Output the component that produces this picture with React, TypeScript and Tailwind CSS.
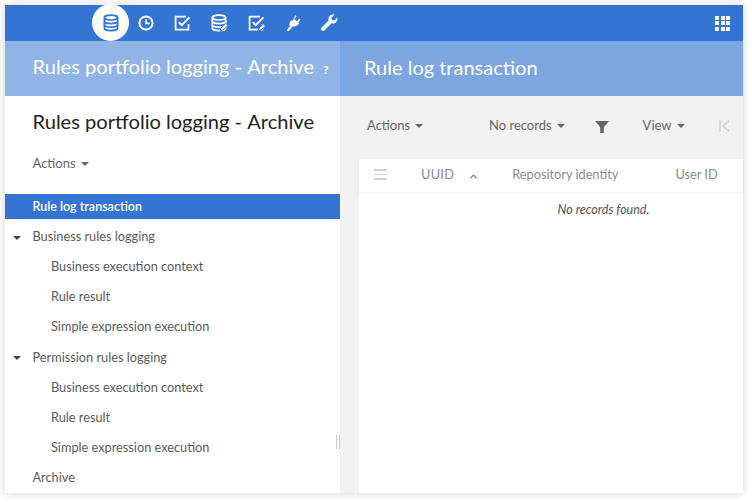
import { ChevronUp } from "lucide-react";

const Caret = ({ className = "" }: { className?: string }) => (
  <svg width="8" height="4" viewBox="0 0 8 4" className={className}>
    <path d="M0 0h8L4 4z" fill="currentColor" />
  </svg>
);

const Db = ({ size = 18, color = "currentColor", edit = false }: { size?: number; color?: string; edit?: boolean }) => (
  <svg width={size} height={size} viewBox="0 0 18 18" fill="none" stroke={color} strokeWidth="1.7">
    <ellipse cx="9" cy="3.6" rx="6.6" ry="2.4" />
    <path d="M2.4 3.6v10.6c0 1.3 3 2.4 6.6 2.4s6.6-1.1 6.6-2.4V3.6" />
    <path d="M2.4 7.2c0 1.3 3 2.4 6.6 2.4s6.6-1.1 6.6-2.4M2.4 10.8c0 1.3 3 2.4 6.6 2.4s6.6-1.1 6.6-2.4" />
    {edit && <path d="M10 17l1-3 5-4.5 2 2-5 4.5z" fill={color} stroke="#3474d2" strokeWidth="1" />}
  </svg>
);

const Clock = () => (
  <svg width="16" height="16" viewBox="0 0 16 16" fill="none" stroke="white" strokeWidth="2">
    <circle cx="8" cy="8" r="6.6" />
    <path d="M8 4.2V8.4H11.6" strokeWidth="1.6" />
  </svg>
);

const Check = ({ edit = false }: { edit?: boolean }) => (
  <svg width="17" height="17" viewBox="0 0 17 17" fill="none" stroke="white" strokeWidth="1.7">
    <path d="M14.5 9v5.6H1.6V1.6H12" />
    <path d="M4.8 7.2l3 3L15.4 2.4" strokeWidth="2" />
    {edit && <path d="M10 16l1-3 4.5-4 2 2-4.5 4z" fill="white" stroke="#3474d2" strokeWidth="1" />}
  </svg>
);

const Plug = () => (
  <svg width="18" height="18" viewBox="0 0 18 18" fill="white">
    <path d="M11.2 1.2l1.4 1.1-2.4 2.8 2.7 2.2 2.4-2.8 1.4 1.1-2.5 2.9 1 .9-1 1.2c-1.5 1.7-3.6 2.3-5.3 1.7L7 14.6 4.6 17l-1-.1-.9-.9 3.1-3.5c-.8-1.6-.5-3.7 1-5.4l1-1.2 1 .8z" />
  </svg>
);

const Wrench = () => (
  <svg width="18" height="18" viewBox="0 0 18 18" fill="white">
    <path d="M17.2 3.6l-3 2.9-2.2-.6-.6-2.2 3-3c-1.8-.5-3.5 0-4.7 1.2C8.5 3.1 8.1 4.8 8.7 6.4L1.3 14c-.5.5-.5 1.3 0 1.8l.9.9c.5.5 1.3.5 1.8 0l7.5-7.5c1.6.6 3.4.2 4.6-1 1.2-1.2 1.6-3 1.1-4.6z" />
  </svg>
);

const Grid = () => (
  <div className="grid grid-cols-3 gap-[1.5px] w-[15px]">
    {Array.from({ length: 9 }).map((_, i) => (
      <div key={i} className="w-[4px] h-[4px] bg-white" />
    ))}
  </div>
);

const Item = ({ label, indent = false, caret = false }: { label: React.ReactNode; indent?: boolean; caret?: boolean }) => (
  <div className={`relative h-[30.1px] flex items-center text-[12.75px] text-[#5a5a5a] ${indent ? "pl-[46px]" : "pl-[27.5px]"}`}>
    {caret && <Caret className="absolute left-[8px] top-[14px] text-[#444]" />}
    <span>{label}</span>
  </div>
);

const Arch = ({ children }: { children: React.ReactNode }) => (
  <span className="[font-variant-ligatures:common-ligatures]">{children}</span>
);

const Cell = ({ children }: { children: React.ReactNode }) => (
  <div className="w-[36.6px] flex justify-center">{children}</div>
);

export default function App() {
  return (
    <div className="w-[752px] h-[502px] bg-white p-[5px] pb-[9px] pr-[9px] overflow-hidden font-['Lato',sans-serif] [font-variant-ligatures:common-ligatures_discretionary-ligatures]">
      <div className="w-[738px] h-[488px] flex flex-col shadow-[0_0_8px_rgba(0,0,0,0.18)]">
        <div className="h-[36px] bg-[#3474d2] flex items-center shrink-0 pl-[87px] pr-[13px]">
          <div className="w-[37px] h-[37px] mt-[-1px] rounded-full bg-white flex items-center justify-center">
            <Db color="#3474d2" />
          </div>
          <div className="flex items-center ml-[-1px]">
            <Cell><Clock /></Cell>
            <Cell><Check /></Cell>
            <Cell><Db color="white" edit /></Cell>
            <Cell><Check edit /></Cell>
            <Cell><Plug /></Cell>
            <Cell><Wrench /></Cell>
          </div>
          <div className="ml-auto">
            <Grid />
          </div>
        </div>
        <div className="flex-1 flex min-h-0">
          <div className="w-[335px] shrink-0 bg-white flex flex-col relative">
            <div className="h-[55px] bg-[#90b4e6] flex items-center pl-[27.5px] pb-[4px] text-white text-[20.1px]">
              <span className="whitespace-pre">Rules portfolio logging - <Arch>Archive</Arch></span>
              <span className="ml-[9px] text-[12px] font-bold mt-[6px]">?</span>
            </div>
            <div className="h-[98px] pl-[27.5px] pt-[12px]">
              <div className="text-[20.1px] leading-[26px] text-[#222] whitespace-pre">Rules portfolio logging - <Arch>Archive</Arch></div>
              <div className="flex items-center gap-[5px] mt-[20px] text-[13px] text-[#666]">
                Actions <Caret />
              </div>
            </div>
            <div className="h-[25px] bg-[#3474d2] flex items-center pl-[27.5px] pt-[1px] text-white text-[12.5px] font-semibold">
              Rule log transaction
            </div>
            <div className="mt-[2.68px]">
              <Item label="Business rules logging" caret />
              <Item label="Business execution context" indent />
              <Item label="Rule result" indent />
              <Item label="Simple expression execution" indent />
              <Item label="Permission rules logging" caret />
              <Item label="Business execution context" indent />
              <Item label="Rule result" indent />
              <Item label="Simple expression execution" indent />
              <Item label={<Arch>Archive</Arch>} />
            </div>
            <div className="absolute right-0 top-[394px] w-[4px] h-[14px] border-x border-[#ccc]" />
          </div>
          <div className="flex-1 min-w-0 bg-[#f2f2f2] flex flex-col">
            <div className="h-[55px] bg-[#7ba6e0] flex items-center pl-[24px] pb-[4px] text-white text-[20px]">
              Rule log transaction
            </div>
            <div className="h-[63px] flex items-center pl-[27px] pb-[3px] text-[13px] text-[#666]">
              <div className="flex items-center gap-[5px] w-[122px]">
                Actions <Caret />
              </div>
              <div className="flex items-center gap-[5px]">
                No records <Caret />
              </div>
              <svg width="14" height="14" viewBox="0 0 14 14" className="ml-[30px] mt-[2px]">
                <path d="M0 1h14L8.8 7.2V13H5.2V7.2z" fill="#666" />
              </svg>
              <div className="flex items-center gap-[5px] ml-[34px]">
                View <Caret />
              </div>
              <svg width="11" height="12" viewBox="0 0 11 12" fill="none" stroke="#ccc" strokeWidth="1.3" className="ml-[34px]">
                <path d="M1 0v12M10 1L4 6l6 5" />
              </svg>
            </div>
            <div className="flex-1 ml-[19px] bg-white rounded-tl-[3px] flex flex-col">
              <div className="h-[33px] flex items-center pb-[2px] text-[12.75px] text-[#8a8a8a] shadow-[0_1px_2px_rgba(0,0,0,0.08)] relative">
                <div className="ml-[15px] w-[13px] flex flex-col gap-[3px]">
                  <div className="h-[1.5px] bg-[#d0d0d0]" />
                  <div className="h-[1.5px] bg-[#d0d0d0]" />
                  <div className="h-[1.5px] bg-[#d0d0d0]" />
                </div>
                <div className="ml-[34px] tracking-[0.3px]">UUID</div>
                <ChevronUp size={11} strokeWidth={2.5} className="ml-[14px] mt-[4px] text-[#777]" />
                <div className="ml-[33px]">Repository identity</div>
                <div className="ml-[57px]">User ID</div>
              </div>
              <div className="mt-[9px] text-[12.5px] italic text-[#555] text-center pl-[105px] whitespace-nowrap w-[384px]">
                No records found.
              </div>
            </div>
          </div>
        </div>
      </div>
    </div>
  );
}
